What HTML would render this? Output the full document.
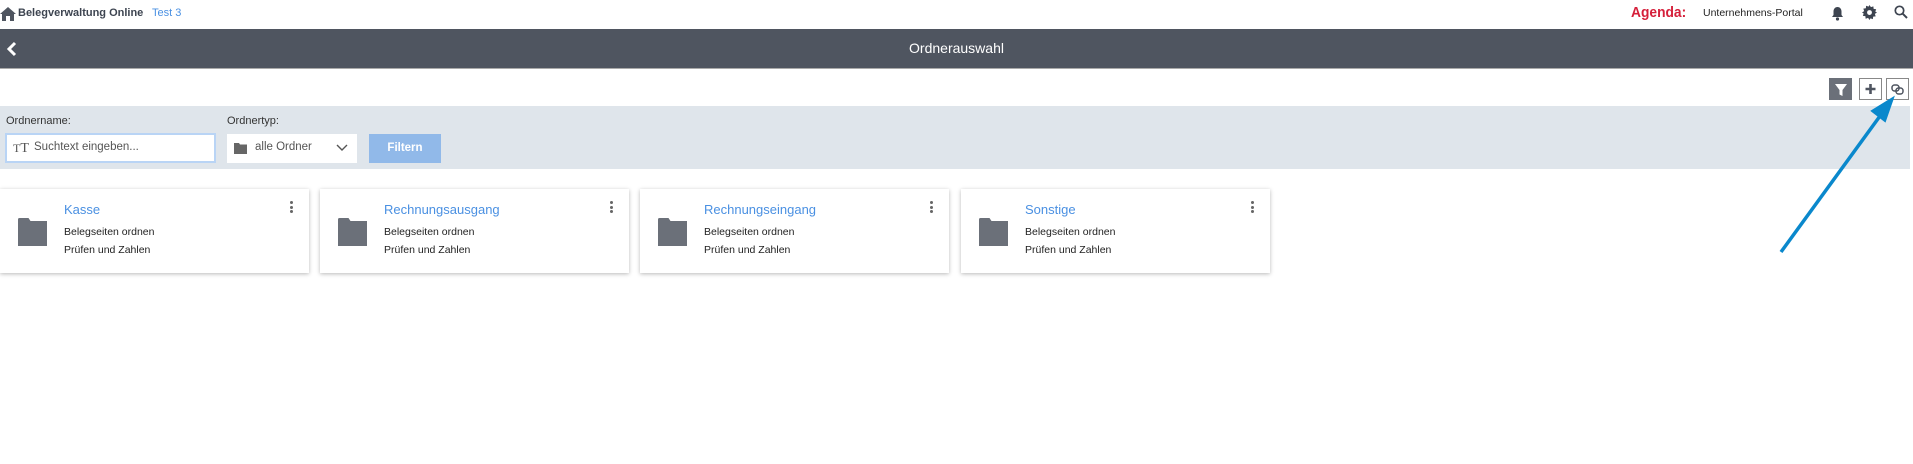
<!DOCTYPE html>
<html><head><meta charset="utf-8"><style>
*{margin:0;padding:0;box-sizing:border-box}
body{width:1913px;height:464px;background:#fff;font-family:"Liberation Sans",sans-serif;position:relative;overflow:hidden;color:#333}
.abs{position:absolute}
.card{position:absolute;top:189px;width:309px;height:84px;background:#fff;box-shadow:0 1px 4px rgba(0,0,0,.28)}
.card .t{position:absolute;left:64px;top:13px;font-size:13px;color:#4a90e2}
.card .l1{position:absolute;left:64px;top:37px;font-size:10.5px;color:#222}
.card .l2{position:absolute;left:64px;top:55px;font-size:10.5px;color:#222}
.card svg.f{position:absolute;left:18px;top:29px}
.card .k{position:absolute;right:16px;top:12px;width:3px}
.card .k i{display:block;width:3px;height:3px;border-radius:50%;background:#666;margin-bottom:1.5px}
.btn{position:absolute;top:78px;width:23px;height:22px;border:1px solid #888;background:#fff}
</style></head><body>
<!-- top bar -->
<svg class="abs" style="left:0;top:6px" width="16" height="16" viewBox="0 0 16 16"><path d="M8 1L0 8h2v7h4v-5h4v5h4V8h2z" fill="#4f5560"/></svg>
<div class="abs" style="left:18px;top:7px;font-size:11px;font-weight:bold;color:#3d4450">Belegverwaltung Online</div>
<div class="abs" style="left:152px;top:7px;font-size:11px;color:#4a90e2">Test 3</div>
<div class="abs" style="left:1631px;top:4px;font-size:15px;font-weight:bold;color:#d51f3a;transform:scaleX(0.92);transform-origin:left">Agenda:</div>
<div class="abs" style="left:1703px;top:7px;font-size:10.5px;color:#222">Unternehmens-Portal</div>
<svg class="abs" style="left:1831px;top:6px" width="13" height="15" viewBox="0 0 13 15"><path d="M6.5 1c-2.5 0-4 2-4 4.5v3.5L1 11h11l-1.5-2V5.5C10.5 3 9 1 6.5 1z" fill="#3d4450"/><circle cx="6.5" cy="13" r="1.6" fill="#3d4450"/></svg>
<svg class="abs" style="left:1862px;top:5px" width="15" height="15" viewBox="0 0 16 16"><path d="M8 0l1.5 2.3 2.6-.9.3 2.7 2.7.4-.9 2.6L16 8l-2.3 1.5.9 2.6-2.7.3-.3 2.7-2.6-.9L8 16l-1.5-2.3-2.6.9-.3-2.7-2.7-.3.9-2.6L0 8l2.3-1.5-.9-2.6 2.7-.4.3-2.7 2.6.9z" fill="#3d4450"/><circle cx="8" cy="8" r="2.6" fill="#fff"/></svg>
<svg class="abs" style="left:1894px;top:5px" width="14" height="14" viewBox="0 0 14 14"><circle cx="5.5" cy="5.5" r="4.2" stroke="#3d4450" stroke-width="1.7" fill="none"/><path d="M8.6 8.6L13 13" stroke="#3d4450" stroke-width="2"/></svg>
<!-- dark bar -->
<div class="abs" style="left:0;top:29px;width:1913px;height:40px;background:#4f5560;border-bottom:1px solid #aaa"></div>
<svg class="abs" style="left:6px;top:41px" width="12" height="16" viewBox="0 0 12 16"><path d="M9 2L3 8l6 6" stroke="#fff" stroke-width="3" fill="none"/></svg>
<div class="abs" style="left:0;top:40px;width:1913px;text-align:center;font-size:14px;color:#fff">Ordnerauswahl</div>
<!-- toolbar buttons -->
<div class="btn" style="left:1829px;background:#6b7079;border-color:#6b7079"><svg width="23" height="22" viewBox="0 0 23 22"><path d="M5 5h12l-4.5 6v6l-3-1.5V11z" fill="#fff"/></svg></div>
<div class="btn" style="left:1859px"><svg width="21" height="20" viewBox="0 0 21 20"><path d="M10.5 5v10M5.5 10h10" stroke="#4f5560" stroke-width="2.6"/></svg></div>
<div class="btn" style="left:1886px"><svg width="21" height="20" viewBox="0 0 21 20"><rect x="5" y="6" width="7" height="6" rx="2.5" stroke="#4f5560" stroke-width="1.5" fill="none"/><rect x="9" y="9" width="7" height="6" rx="2.5" stroke="#4f5560" stroke-width="1.5" fill="none"/></svg></div>
<!-- filter area -->
<div class="abs" style="left:0;top:106px;width:1910px;height:63px;background:#dfe5eb"></div>
<div class="abs" style="left:6px;top:115px;font-size:11px;color:#333">Ordnername:</div>
<div class="abs" style="left:227px;top:115px;font-size:11px;color:#333">Ordnertyp:</div>
<div class="abs" style="left:5px;top:133px;width:211px;height:30px;background:#fff;border:2px solid #b9d4f5"></div>
<div class="abs" style="left:13px;top:141px;font-size:12px;font-family:'Liberation Serif',serif;color:#555">T<span style="font-size:14px">T</span></div>
<div class="abs" style="left:34px;top:141px;font-size:11.5px;color:#555">Suchtext eingeben...</div>
<div class="abs" style="left:227px;top:134px;width:130px;height:29px;background:#fff"></div>
<svg class="abs" style="left:234px;top:142px" width="13" height="12" viewBox="0 0 13 12"><path d="M0 1h5l1 1.5h7V12H0z" fill="#666"/></svg>
<div class="abs" style="left:255px;top:141px;font-size:11.5px;color:#555">alle Ordner</div>
<svg class="abs" style="left:336px;top:144px" width="12" height="8" viewBox="0 0 12 8"><path d="M1 1l5 5 5-5" stroke="#555" stroke-width="1.4" fill="none"/></svg>
<div class="abs" style="left:369px;top:134px;width:72px;height:29px;background:#91b9e9;color:#fff;font-size:11.5px;font-weight:bold;text-align:center;line-height:29px">Filtern</div>
<!-- cards -->
<div class="card" style="left:0"><svg class="f" width="29" height="28" viewBox="0 0 29 28"><path d="M0 1.5a1.5 1.5 0 011.5-1.5h9l2 3H29V28H0z" fill="#6b7079"/></svg><div class="t">Kasse</div><div class="l1">Belegseiten ordnen</div><div class="l2">Prüfen und Zahlen</div><div class="k"><i></i><i></i><i></i></div></div>
<div class="card" style="left:320px"><svg class="f" width="29" height="28" viewBox="0 0 29 28"><path d="M0 1.5a1.5 1.5 0 011.5-1.5h9l2 3H29V28H0z" fill="#6b7079"/></svg><div class="t">Rechnungsausgang</div><div class="l1">Belegseiten ordnen</div><div class="l2">Prüfen und Zahlen</div><div class="k"><i></i><i></i><i></i></div></div>
<div class="card" style="left:640px"><svg class="f" width="29" height="28" viewBox="0 0 29 28"><path d="M0 1.5a1.5 1.5 0 011.5-1.5h9l2 3H29V28H0z" fill="#6b7079"/></svg><div class="t">Rechnungseingang</div><div class="l1">Belegseiten ordnen</div><div class="l2">Prüfen und Zahlen</div><div class="k"><i></i><i></i><i></i></div></div>
<div class="card" style="left:961px"><svg class="f" width="29" height="28" viewBox="0 0 29 28"><path d="M0 1.5a1.5 1.5 0 011.5-1.5h9l2 3H29V28H0z" fill="#6b7079"/></svg><div class="t">Sonstige</div><div class="l1">Belegseiten ordnen</div><div class="l2">Prüfen und Zahlen</div><div class="k"><i></i><i></i><i></i></div></div>
<!-- arrow -->
<svg class="abs" style="left:0;top:0" width="1913" height="464"><path d="M1781 252L1880 116" stroke="#0a88cc" stroke-width="3.5"/><path d="M1893 98L1872 111L1885 121z" fill="#0a88cc" stroke="#0a88cc" stroke-width="2"/></svg>
</body></html>
